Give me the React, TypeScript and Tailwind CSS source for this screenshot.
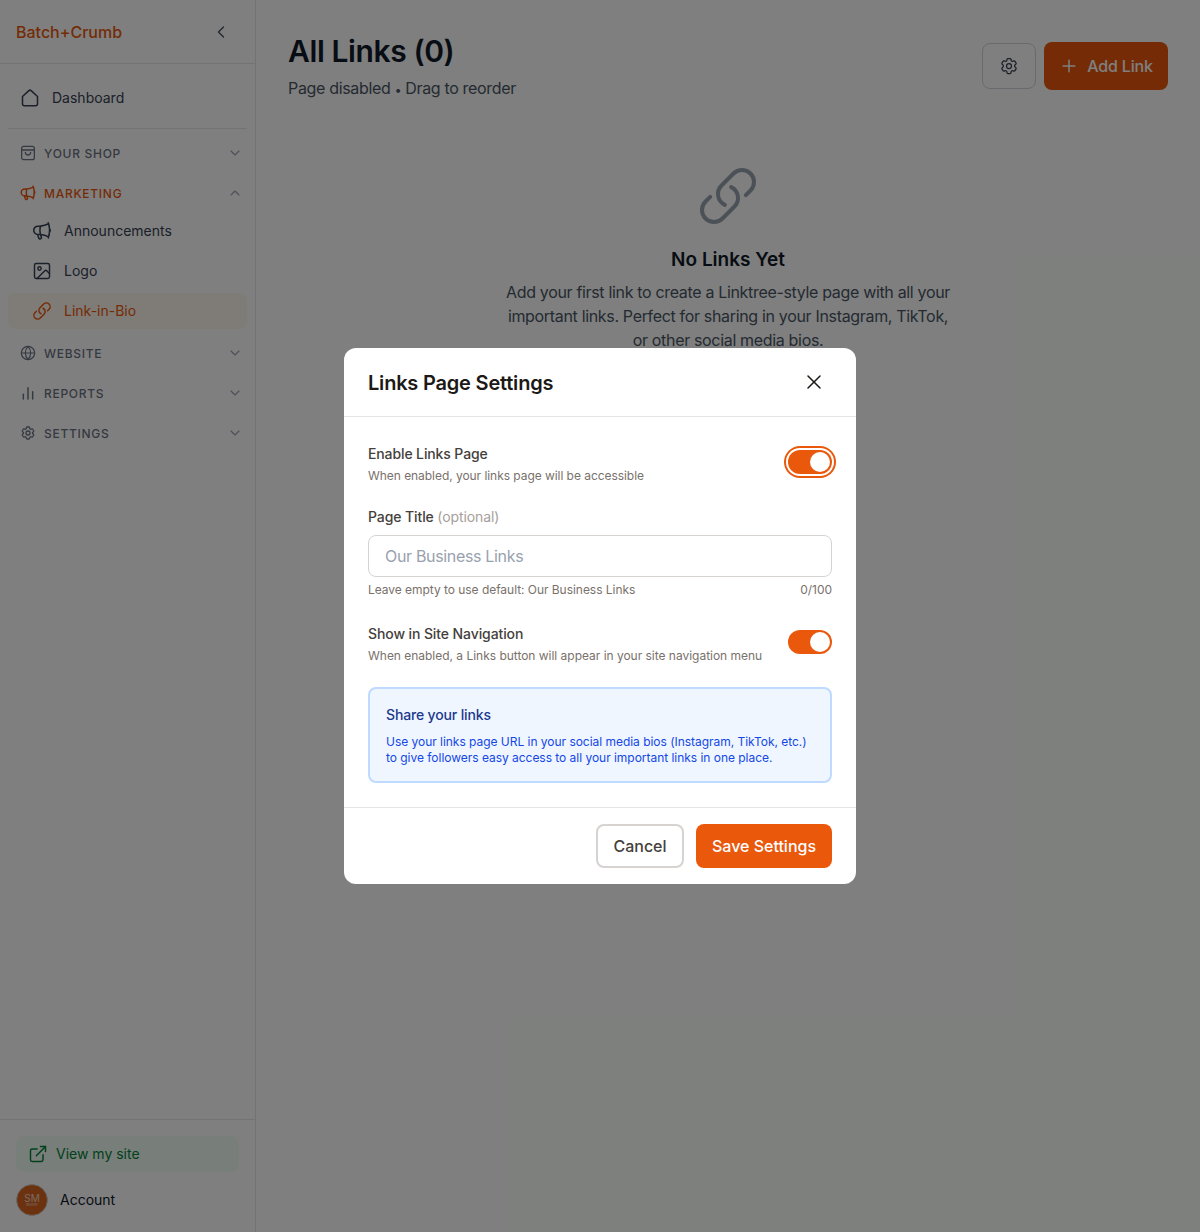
import React from 'react';
import { ChevronDown, ChevronLeft, ChevronUp, ExternalLink, Image as ImageIcon, Plus, X, Globe } from 'lucide-react';
import { HiOutlineCog6Tooth, HiOutlineLink, HiOutlineMegaphone } from 'react-icons/hi2';

function ShopIcon({ className }: { className?: string }) {
  return (
    <svg className={className} viewBox="0 0 24 24" fill="none" stroke="currentColor" strokeWidth="1.9" strokeLinecap="round" strokeLinejoin="round">
      <rect x="2.5" y="2" width="19" height="20" rx="3" />
      <path d="M2.5 7.5h19" />
      <path d="M8 11c0 2.4 1.7 4 4 4s4-1.6 4-4" />
    </svg>
  );
}

function HomeIcon({ className }: { className?: string }) {
  return (
    <svg className={className} viewBox="0 0 24 24" fill="none" stroke="currentColor" strokeWidth="1.8" strokeLinecap="round" strokeLinejoin="round">
      <path d="M3 10.2 10.6 3.2a2 2 0 0 1 2.8 0L21 10.2V19a2.4 2.4 0 0 1-2.4 2.4H5.4A2.4 2.4 0 0 1 3 19Z" />
    </svg>
  );
}

function BarsIcon({ className }: { className?: string }) {
  return (
    <svg className={className} viewBox="0 0 24 24" fill="none" stroke="currentColor" strokeWidth="2.2" strokeLinecap="round">
      <path d="M5 21v-7" />
      <path d="M12 21V4" />
      <path d="M19 21V10" />
    </svg>
  );
}

function SectionRow({ label, icon, open, active }: { label: string; icon: React.ReactNode; open?: boolean; active?: boolean }) {
  return (
    <div className={`flex h-10 items-center gap-2 pl-3 pr-1 ${active ? 'text-[#ea580c]' : 'text-gray-500'}`}>
      <span className="flex h-4 w-4 items-center justify-center">{icon}</span>
      <span className="flex-1 pt-px text-xs font-medium tracking-[0.72px]">{label}</span>
      {open ? <ChevronUp className="h-4 w-4 text-gray-400" strokeWidth={1.75} /> : <ChevronDown className="h-4 w-4 text-gray-400" strokeWidth={1.75} />}
    </div>
  );
}

function SubItem({ label, icon, active }: { label: string; icon: React.ReactNode; active?: boolean }) {
  return (
    <div className={`flex h-9 items-center gap-3 rounded-lg pl-6 text-sm ${active ? 'bg-orange-50 text-[#ea580c]' : 'text-gray-700'}`}>
      <span className="flex h-5 w-5 items-center justify-center">{icon}</span>
      <span>{label}</span>
    </div>
  );
}

function Toggle({ ring }: { ring?: boolean }) {
  return (
    <div className={`mt-1.5 flex h-6 w-11 shrink-0 items-center justify-end rounded-full bg-[#ea580c] pr-0.5 ${ring ? 'ring-2 ring-[#ea580c] ring-offset-2' : ''}`}>
      <div className="h-5 w-5 rounded-full bg-white" />
    </div>
  );
}

export default function App() {
  return (
    <div className="relative flex h-[1232px] w-[1200px] overflow-hidden bg-[#fcfffc] font-['Inter',sans-serif]">
      {/* SIDEBAR */}
      <aside className="flex w-64 shrink-0 flex-col border-r border-gray-200 bg-white">
        <div className="flex h-16 items-center justify-between border-b border-gray-200 pl-4 pr-6">
          <span className="text-base font-medium text-[#ea580c]">Batch+Crumb</span>
          <ChevronLeft className="h-5 w-5 text-gray-600" strokeWidth={1.75} />
        </div>
        <div className="flex-1 px-2">
          <div className="flex h-[65px] items-center gap-3 border-b border-gray-200 pl-3 pt-[3px] text-sm text-gray-700">
            <HomeIcon className="h-5 w-5" />
            <span>Dashboard</span>
          </div>
          <div className="pt-1">
            <SectionRow label="YOUR SHOP" icon={<ShopIcon className="h-4 w-4" />} />
            <SectionRow label="MARKETING" icon={<HiOutlineMegaphone className="h-[18px] w-[18px] shrink-0" strokeWidth={2} />} open active />
            <div className="flex flex-col gap-1 pb-1">
              <SubItem label="Announcements" icon={<HiOutlineMegaphone className="h-[22px] w-[22px] shrink-0" strokeWidth={1.7} />} />
              <SubItem label="Logo" icon={<ImageIcon className="h-5 w-5" strokeWidth={1.75} />} />
              <SubItem label="Link-in-Bio" icon={<HiOutlineLink className="h-5 w-5" strokeWidth={1.75} />} active />
            </div>
            <SectionRow label="WEBSITE" icon={<Globe className="h-4 w-4" strokeWidth={1.75} />} />
            <SectionRow label="REPORTS" icon={<BarsIcon className="h-4 w-4" />} />
            <SectionRow label="SETTINGS" icon={<HiOutlineCog6Tooth className="h-4 w-4" strokeWidth={1.9} />} />
          </div>
        </div>
        <div className="border-t border-gray-200 px-4 pb-4 pt-4">
          <div className="flex h-9 items-center gap-2 rounded-lg bg-green-50 pl-3 text-sm text-green-700">
            <ExternalLink className="h-5 w-5" strokeWidth={1.75} />
            <span>View my site</span>
          </div>
          <div className="mt-3 flex items-center gap-3">
            <div className="flex h-8 w-8 flex-col items-center justify-center rounded-full border border-gray-300 bg-[#d9651f] text-white">
              <span className="text-[10px] leading-none opacity-70">SM</span>
              <span className="mt-px text-[3px] leading-none opacity-70">BAKERY</span>
            </div>
            <span className="text-sm text-gray-900">Account</span>
          </div>
        </div>
      </aside>

      {/* MAIN */}
      <main className="flex-1 px-8 pt-8">
        <div className="flex items-start justify-between">
          <div>
            <h1 className="pt-px text-3xl font-semibold tracking-[-0.4px] text-gray-900">All Links (0)</h1>
            <p className="mt-[7px] h-6 text-base tracking-[-0.33px] text-gray-600">
              Page disabled <span className="text-xs">•</span> Drag to reorder
            </p>
          </div>
          <div className="mt-2.5 flex items-center gap-2">
            <div className="flex h-[46px] w-[54px] items-center justify-center rounded-lg border border-gray-300 text-gray-700">
              <HiOutlineCog6Tooth className="h-5 w-5" />
            </div>
            <div className="flex h-12 w-[124px] items-center justify-center gap-2 rounded-lg bg-[#ea580c] text-base font-medium tracking-[-0.2px] text-white">
              <Plus className="h-5 w-5" strokeWidth={1.75} />
              <span>Add Link</span>
            </div>
          </div>
        </div>
        <div className="mt-16 flex flex-col items-center text-center">
          <HiOutlineLink className="h-16 w-16 text-gray-400" />
          <h2 className="mt-[18px] text-[19px] font-semibold text-gray-900">No Links Yet</h2>
          <p className="mt-[5px] w-[448px] text-base tracking-[-0.33px] text-gray-600">
            Add your first link to create a Linktree-style page with all your important links. Perfect for sharing in your Instagram, TikTok, or other social media bios.
          </p>
        </div>
      </main>

      {/* MODAL OVERLAY */}
      <div className="absolute inset-0 flex items-center justify-center bg-black/50">
        <div className="w-[512px] rounded-xl bg-white">
          <div className="flex h-[69px] items-center justify-between border-b border-stone-200 px-6">
            <h3 className="mt-0.5 text-xl font-semibold tracking-[-0.2px] text-stone-900">Links Page Settings</h3>
            <X className="mr-1.5 h-6 w-6 text-stone-900" strokeWidth={1.5} />
          </div>
          <div className="px-6 pt-[27px]">
            <div className="flex items-start justify-between">
              <div>
                <div className="text-sm font-medium tracking-[-0.12px] text-stone-700">Enable Links Page</div>
                <div className="mt-1 text-xs tracking-[-0.05px] text-stone-500">When enabled, your links page will be accessible</div>
              </div>
              <Toggle ring />
            </div>
            <div className="mt-[23px]">
              <div className="text-sm font-medium tracking-[-0.1px] text-stone-700">
                Page Title <span className="font-normal text-stone-400">(optional)</span>
              </div>
              <div className="mt-2 flex h-[42px] items-center rounded-lg border border-stone-300 px-4 text-base tracking-[-0.33px] text-gray-400">Our Business Links</div>
              <div className="mt-[5px] flex justify-between text-xs tracking-[-0.04px] text-stone-500">
                <span>Leave empty to use default: Our Business Links</span>
                <span>0/100</span>
              </div>
            </div>
            <div className="mt-[26px] flex items-start justify-between">
              <div>
                <div className="text-sm font-medium tracking-[-0.1px] text-stone-700">Show in Site Navigation</div>
                <div className="mt-1 text-xs tracking-[-0.02px] text-stone-500">When enabled, a Links button will appear in your site navigation menu</div>
              </div>
              <Toggle />
            </div>
            <div className="mt-[23px] rounded-lg border-2 border-blue-200 bg-blue-50 px-4 pb-[15px] pt-4">
              <div className="text-sm font-medium tracking-[-0.15px] text-blue-900">Share your links</div>
              <div className="mt-[9px] text-xs leading-4 tracking-[-0.03px] text-blue-700">
                Use your links page URL in your social media bios (Instagram, TikTok, etc.) to give followers easy access to all your important links in one place.
              </div>
            </div>
          </div>
          <div className="mt-6 flex justify-end gap-3 border-t border-stone-200 px-6 py-4">
            <div className="flex h-11 w-[88px] items-center justify-center rounded-lg border-2 border-stone-300 text-base font-medium text-stone-700">Cancel</div>
            <div className="flex h-11 w-[136px] items-center justify-center rounded-lg bg-[#ea580c] text-base font-medium text-white">Save Settings</div>
          </div>
        </div>
      </div>
    </div>
  );
}
